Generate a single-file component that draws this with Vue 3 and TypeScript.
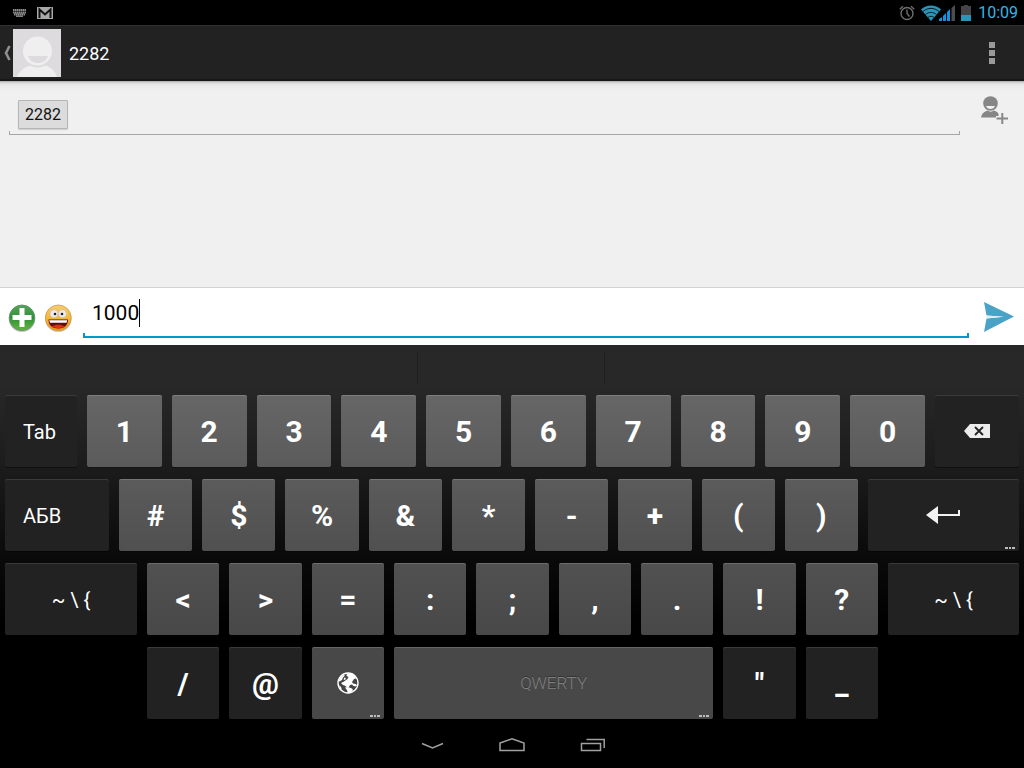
<script setup lang="ts">
import { ref } from 'vue'

interface Key {
  label: string
  tone?: 'light' | 'dark'
  kind?: 'char' | 'word' | 'sym' | 'space'
  icon?: 'backspace' | 'enter' | 'globe'
  hint?: boolean
}

const chars = (list: string): Key[] => list.split(' ').map((label) => ({ label, tone: 'light', kind: 'char' }))

const rows: { name: string; keys: Key[] }[] = [
  {
    name: 'row-digits',
    keys: [
      { label: 'Tab', tone: 'dark', kind: 'word' },
      ...chars('1 2 3 4 5 6 7 8 9 0'),
      { label: 'Backspace', tone: 'dark', icon: 'backspace' },
    ],
  },
  {
    name: 'row-symbols',
    keys: [
      { label: 'АБВ', tone: 'dark', kind: 'word' },
      ...chars('# $ % & * - + ( )'),
      { label: 'Enter', tone: 'dark', icon: 'enter', hint: true },
    ],
  },
  {
    name: 'row-marks',
    keys: [
      { label: '~ \\ {', tone: 'dark', kind: 'sym' },
      ...chars('< > = : ; , . ! ?'),
      { label: '~ \\ {', tone: 'dark', kind: 'sym' },
    ],
  },
  {
    name: 'row-bottom',
    keys: [
      { label: '/', tone: 'dark', kind: 'char' },
      { label: '@', tone: 'dark', kind: 'char' },
      { label: 'Language', tone: 'light', icon: 'globe', hint: true },
      { label: 'QWERTY', tone: 'light', kind: 'space', hint: true },
      { label: '"', tone: 'dark', kind: 'char' },
      { label: '_', tone: 'dark', kind: 'char' },
    ],
  },
]

const recipient = ref('')
const message = ref('1000')
</script>

<template>
  <div class="screen">
    <div class="status">
      <div class="status-side">
        <svg width="14" height="8" viewBox="0 0 14 8">
          <path d="M0 1h13M0 3.500h13M1 5.500h11" stroke="#8c8c8c" stroke-width="1.800" stroke-dasharray="1.600 .4" />
          <path d="M3 7.200h7" stroke="#8c8c8c" stroke-width="1.400" />
        </svg>
        <svg width="16" height="12" viewBox="0 0 16 12">
          <rect width="16" height="12" fill="#a9a9a9" />
          <path d="M2.500 11V2.500L8 7.500l5.500-5V11" fill="none" stroke="#111" stroke-width="2" />
        </svg>
      </div>
      <div class="status-side status-right">
        <svg width="16" height="16" viewBox="0 0 16 16" fill="none" stroke="#6e6e6e" stroke-width="1.400">
          <circle cx="8" cy="8.500" r="6" />
          <path d="M8 4.500v4l2.500 3M.8 4.200L4 1.300M15.200 4.200L12 1.300" />
        </svg>
        <svg class="st-wifi" width="20" height="16" viewBox="0 0 20 16">
          <path d="M10 16L0 4.500C5.500-.8 14.500-.8 20 4.500z" fill="#2d93b8" />
          <path d="M2 6.500c5-4.200 11-4.200 16 0M4.500 9.500c3.300-2.800 7.700-2.800 11 0M7 12.400c2-1.500 4-1.500 6 0" fill="none" stroke="#04141a" stroke-width=".9" />
        </svg>
        <svg class="st-signal" width="16" height="16" viewBox="0 0 16 16">
          <path d="M0 16v-2l3-2v4zM4 16v-5l3-3v8zM8 16V7l3-3v12z" fill="#0a96e0" />
          <path d="M12.500 16V3L16 0v16z" fill="#4d4d4d" />
        </svg>
        <svg class="st-battery" width="10" height="16" viewBox="0 0 10 16">
          <path d="M3 0h4v1h3v9H0V1h3z" fill="#454545" />
          <path d="M0 10h10v6H0z" fill="#2d93b8" />
        </svg>
        <span class="clock">10:09</span>
      </div>
    </div>

    <header class="bar">
      <button class="up" aria-label="Back">
        <svg width="8" height="16" viewBox="0 0 8 16">
          <path d="M6.500 1L3 8l3.500 7" fill="none" stroke="#8f8f8f" stroke-width="2.600" />
        </svg>
        <svg width="48" height="48" viewBox="0 0 48 48">
          <rect width="48" height="48" fill="#dddbde" />
          <path d="M4 48c3-7 8-10 13-11.500h15C38 38 42 42 44 48z" fill="#efeff0" />
          <circle cx="24.500" cy="22.500" r="16" fill="#dddbde" />
          <circle cx="24.500" cy="22" r="14.500" fill="#efeff0" />
          <path d="M15 27h20c-1.500 4.500-5 7-10 7s-8.500-2.500-10-7z" fill="#dddbde" />
        </svg>
      </button>
      <h1>2282</h1>
      <button class="overflow" aria-label="More options">
        <svg width="6" height="22" viewBox="0 0 6 22" fill="#999">
          <path d="M0 0h6v6H0zM0 8h6v6H0zM0 16h6v6H0z" />
        </svg>
      </button>
    </header>

    <main class="thread">
      <div class="to">
        <button class="chip">2282</button>
        <input v-model="recipient" class="to-input" type="text" aria-label="To" />
      </div>
      <button class="add-person" aria-label="Add recipient">
        <svg width="28" height="30" viewBox="0 0 28 30" fill="#868686">
          <circle cx="10.500" cy="8.500" r="7.300" />
          <path d="M1 22.500c1-4.500 3.500-6 6.500-7 2 1.500 4.500 1.500 6.500 0 2.500.8 4 2 4.500 3.500v3.500z" />
          <path d="M6 11h9c-.8 2-2.300 3-4.500 3s-3.700-1-4.500-3z" fill="#f0f0f0" />
          <path d="M20 17h5v4h4v5h-4v4h-5v-4h-4v-5h4z" fill="#f0f0f0" />
          <path d="M21.300 18h2v4.500H28v2h-4.700V29h-2v-4.500H16.500v-2h4.800z" />
        </svg>
      </button>
    </main>

    <form class="composer" @submit.prevent>
      <button type="button" class="tool" aria-label="Attach">
        <svg width="28" height="28" viewBox="0 0 28 28">
          <defs>
            <linearGradient id="attachFill" x1="0" y1="0" x2="0" y2="1">
              <stop offset="0" stop-color="#55a35a" /><stop offset=".5" stop-color="#2f8f3a" /><stop offset="1" stop-color="#62b83a" />
            </linearGradient>
          </defs>
          <circle cx="14" cy="14.500" r="13.300" fill="#b9b9b9" />
          <circle cx="14" cy="13.700" r="12.700" fill="url(#attachFill)" stroke="#5d9a60" stroke-width="1" />
          <path d="M11.500 4h5v7h7v5h-7v7h-5v-7h-7v-5h7z" fill="#fff" />
        </svg>
      </button>
      <button type="button" class="tool" aria-label="Emoji">
        <svg width="28" height="28" viewBox="0 0 28 28">
          <defs>
            <linearGradient id="faceFill" x1="0" y1="0" x2="0" y2="1">
              <stop offset="0" stop-color="#f2cf78" /><stop offset=".5" stop-color="#f5b83c" /><stop offset="1" stop-color="#f48c10" />
            </linearGradient>
          </defs>
          <circle cx="14.300" cy="14.500" r="13.300" fill="#c4b8a4" />
          <circle cx="14.300" cy="13.800" r="12.800" fill="url(#faceFill)" stroke="#d99a3a" stroke-width=".8" />
          <path d="M4.500 15.500h19.500c0 6-4 9-9.700 9s-9.800-3-9.800-9z" fill="#5e0d0c" />
          <path d="M5.200 16.200h18l-.6 2.600H6z" fill="#fff" />
          <path d="M8 22.500c3-2.500 9.500-2.500 12.500 0-3 2.300-9.500 2.300-12.500 0z" fill="#d8341c" />
          <circle cx="10" cy="9.800" r="4" fill="#ececec" stroke="#cdb98a" stroke-width=".6" />
          <circle cx="18.500" cy="9.800" r="4" fill="#ececec" stroke="#cdb98a" stroke-width=".6" />
          <circle cx="11" cy="10" r="1.300" fill="#222" /><circle cx="18" cy="10" r="1.300" fill="#222" />
        </svg>
      </button>
      <label class="field">
        <input v-model="message" type="text" aria-label="Message" />
        <span class="caret"></span>
      </label>
      <button type="submit" class="send" aria-label="Send">
        <svg width="30" height="30" viewBox="0 0 30 30">
          <path d="M0 0l30 14.500L0 30l2.500-13.500L19 14.700 2.500 13.400z" fill="#4aa2c6" />
          <path d="M2.500 13.400L20 14.700 2.500 16.500z" fill="#dceef5" />
        </svg>
      </button>
    </form>

    <section class="keyboard" aria-label="Keyboard">
      <div class="suggestions"><span></span><span></span><span></span></div>
      <div class="rows">
        <div v-for="row in rows" :key="row.name" class="row" :class="row.name">
          <button
            v-for="(key, i) in row.keys"
            :key="i"
            class="key"
            :class="[key.tone, key.kind]"
            :aria-label="key.icon ? key.label : undefined"
          >
            <template v-if="!key.icon">{{ key.label }}</template>
            <svg v-else-if="key.icon === 'backspace'" width="26" height="14" viewBox="0 0 26 14">
              <path d="M0 7l6-7h20v14H6z" fill="#ececec" />
              <path d="M11 3l8 8M19 3l-8 8" stroke="#222" stroke-width="1.800" />
            </svg>
            <svg v-else-if="key.icon === 'enter'" width="34" height="18" viewBox="0 0 34 18">
              <path d="M0 9l12-9v8h20V4h2v6H12v8z" fill="#f2f2f2" />
            </svg>
            <svg v-else width="22" height="22" viewBox="0 0 22 22">
              <circle cx="11" cy="11" r="10" fill="#444" stroke="#fff" stroke-width="1.400" />
              <path d="M10 1.500h5l3 2.500 1 2.500-2 .5-2 3 1 1.500 2.500.5 1.500 1-1 1.500-2.500-.5-1.500-1.500-2 .5-1 2-2 .5-1.500-1.500L6 13l-2-2 3-1.500L10.500 7l1-2-2-1z" fill="#fff" />
              <path d="M1.500 9l2-4 3-2 1.500.5-2 2L5 8 2.500 9.500zM7.500 5.500l1.500.5-1 2-1.500-.5zM8 15.500l3-.5 4 1.500 1 1.500-2 2.500-3 .7-1-3zM2 13l2 2 1 3-2-1.500z" fill="#fff" />
            </svg>
            <svg v-if="key.hint" class="hint" width="11" height="2" viewBox="0 0 11 2">
              <path d="M0 0h3v2H0zM4 0h2v2H4zM7 0h3v2H7z" fill="#bcbcbc" />
            </svg>
          </button>
        </div>
      </div>
    </section>

    <nav class="nav">
      <button aria-label="Hide keyboard">
        <svg width="28" height="16" viewBox="0 0 28 16" fill="none" stroke="#a0a0a0" stroke-width="1.500">
          <path d="M4 6.500l10.500 4.500L25 6.500" />
        </svg>
      </button>
      <button aria-label="Home">
        <svg width="28" height="16" viewBox="0 0 28 16" fill="none" stroke="#a0a0a0" stroke-width="1.500">
          <path d="M2 6l12-4.200L26 6v7.500H2z" />
        </svg>
      </button>
      <button aria-label="Recent apps">
        <svg width="28" height="16" viewBox="0 0 28 16" fill="none" stroke="#a0a0a0" stroke-width="1.500">
          <path d="M3.500 6.500h19v7h-19zM8.500 2.500h17.700v8.500" />
        </svg>
      </button>
    </nav>
  </div>
</template>

<style>
html,
body {
  margin: 0;
  background: #000;
}
</style>

<style scoped>
.screen {
  display: flex;
  flex-direction: column;
  min-height: 100vh;
  font-family: Roboto, "Noto Sans", sans-serif;
  background: #000;
}
button {
  display: flex;
  align-items: center;
  justify-content: center;
  margin: 0;
  padding: 0;
  border: 0;
  background: none;
  color: inherit;
  font: inherit;
}
input {
  min-width: 0;
  margin: 0;
  padding: 0;
  border: 0;
  outline: 0;
  background: none;
  color: inherit;
  font: inherit;
}
svg {
  display: block;
  flex: none;
}

.status {
  display: flex;
  justify-content: space-between;
  height: 25px;
  padding: 0 6px 0 13px;
  background: #000;
}
.status-side {
  display: flex;
  align-items: center;
  gap: 10px;
}
.status-right {
  gap: 0;
}
.st-wifi {
  margin-left: 6px;
}
.st-signal {
  margin-left: -2px;
}
.st-battery {
  margin-left: 6px;
}
.clock {
  margin-left: 7px;
  color: #33b5e5;
  font-size: 16px;
  line-height: 25px;
}

.bar {
  display: flex;
  align-items: center;
  box-sizing: border-box;
  height: 56px;
  padding: 0 29px 0 3px;
  border-top: 1px solid #303030;
  border-bottom: 2px solid #1a1717;
  background: #222;
  color: #fff;
}
.up {
  gap: 2px;
}
.bar h1 {
  flex: 1;
  margin: 0 8px;
  padding-top: 2px;
  font-size: 18px;
  font-weight: 400;
  line-height: 24px;
}

.thread {
  display: flex;
  flex: 1;
  align-items: flex-start;
  gap: 20px;
  padding: 14px 16px 14px 9px;
  background: linear-gradient(#a8a8a8, #dedede 2px, #ececec 5px, #f0f0f0 9px);
}
.to {
  display: flex;
  flex: 1;
  align-items: center;
  gap: 8px;
  padding: 5px 9px;
  border-bottom: 1px solid #a6a6a6;
  background:
    linear-gradient(#a6a6a6, #a6a6a6) left bottom / 1px 3px no-repeat,
    linear-gradient(#a6a6a6, #a6a6a6) right bottom / 1px 3px no-repeat;
}
.chip {
  box-sizing: border-box;
  height: 29px;
  padding: 0 6px;
  border: 1px solid #b5b5b5;
  border-radius: 1px;
  background: #dcdcdc;
  box-shadow: 0 1px 1px #ccc;
  color: #111;
  font-size: 16px;
}
.to-input {
  flex: 1;
  font-size: 16px;
}

.composer {
  display: flex;
  align-items: center;
  box-sizing: border-box;
  height: 58px;
  padding: 0 10px 0 8px;
  border-top: 1px solid #d2d2d2;
  background: #fff;
}
.tool {
  margin: 3px 8px 0 0;
}
.field {
  display: flex;
  flex: 1;
  align-items: center;
  box-sizing: border-box;
  height: 43px;
  margin: 0 15px 0 3px;
  padding: 0 9px 6px;
  border-bottom: 2px solid #0099cc;
  background:
    linear-gradient(#0099cc, #0099cc) left bottom / 2px 3px no-repeat,
    linear-gradient(#0099cc, #0099cc) right bottom / 2px 3px no-repeat;
  color: #000;
  font-size: 21px;
}
.field input {
  field-sizing: content;
}
.caret {
  width: 1px;
  height: 28px;
  background: #000;
}

.keyboard {
  background: linear-gradient(#282828, #282828 40px, #1c1c1c 120px, #0c0c0c 200px, #000 280px);
}
.suggestions {
  display: grid;
  grid-template-columns: 418fr 187fr 419fr;
  padding: 6px 0 12px;
}
.suggestions span {
  height: 32px;
  border-right: 1px solid #1e1e1e;
}
.suggestions span:last-child {
  border-right: 0;
}
.rows {
  display: flex;
  flex-direction: column;
  gap: 12px;
  padding: 0 5px;
}
.row {
  display: grid;
  column-gap: 10px;
}
.row-digits {
  grid-template-columns: 360fr repeat(10, 374fr) 420fr;
  --top: #666;
  --bottom: #5b5b5b;
}
.row-symbols {
  grid-template-columns: 936fr repeat(9, 659fr) 1359fr;
  --top: #5b5b5b;
  --bottom: #505050;
}
.row-marks,
.row-bottom {
  grid-template-columns: 396fr repeat(9, 217fr) 393fr;
  --top: #515151;
  --bottom: #484848;
}
.row-bottom {
  --top: #484848;
}
.row-bottom .key:first-child {
  grid-column: 2;
}
.key {
  position: relative;
  box-sizing: border-box;
  min-width: 0;
  height: 72px;
  border-radius: 2px;
  color: #fff;
}
.light {
  background: linear-gradient(var(--top), var(--bottom));
  box-shadow: inset 0 1px rgba(255, 255, 255, 0.16), 0 1px rgba(0, 0, 0, 0.25);
}
.dark {
  background: #222;
  box-shadow: inset 0 1px #3a3a3a, 0 1px rgba(0, 0, 0, 0.4);
}
.char {
  font-size: 30px;
  font-weight: 700;
}
.word {
  justify-content: flex-start;
  padding: 2px 0 0 18px;
  font-size: 20px;
}
.sym {
  padding-top: 2px;
  font-size: 20px;
}
.key.space {
  grid-column: span 4;
  color: #808080;
  font-size: 17px;
  font-weight: 300;
  text-shadow: 0 -1px #333;
}
.hint {
  position: absolute;
  right: 3px;
  bottom: 2px;
}

.nav {
  display: flex;
  justify-content: center;
  gap: 52px;
  padding: 18px 0 15px;
}
</style>
